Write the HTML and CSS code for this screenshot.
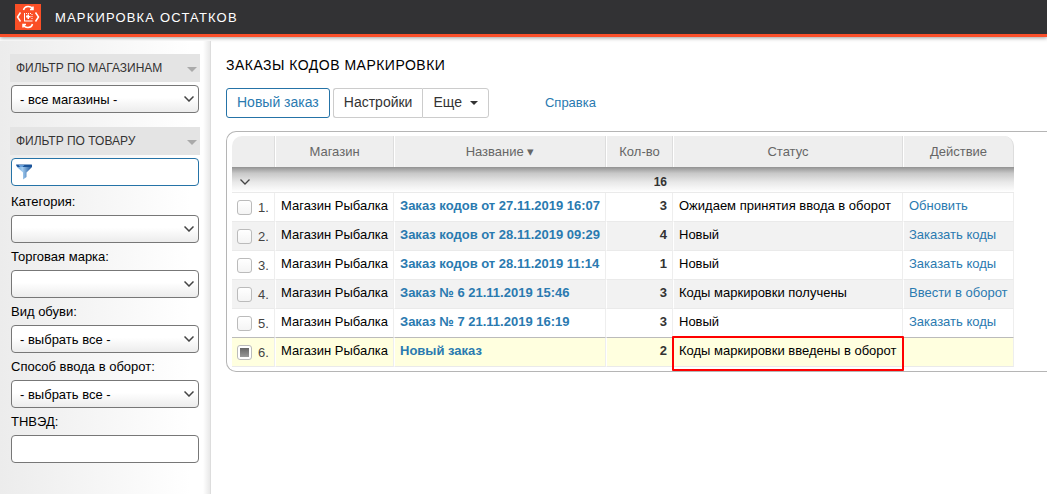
FILE: index.html
```html
<!DOCTYPE html>
<html lang="ru">
<head>
<meta charset="utf-8">
<meta name="viewport" content="width=device-width, initial-scale=1">
<title>Маркировка остатков</title>
<link rel="stylesheet" href="styles.css">
</head>
<body>
<header class="topbar">
  <svg class="logo" viewBox="0 0 26 26" aria-hidden="true">
    <rect width="26" height="26" fill="#fa4f26"/>
    <g fill="none" stroke="#fff" stroke-width="1.500">
      <path d="M8.500 6C9.500 1.500 16 1.500 17.500 5M18 2.500v3h-3"/>
      <path d="M17.500 20C16.500 24.500 10 24.500 8.500 21M8 23.500v-3h3"/>
      <path d="M5.500 8.500L2.500 13l3 4.500M20.500 8.500l3 4.500-3 4.500"/>
    </g>
    <path fill="#fff" d="M9 9h1v7.500h7.500v1H9zM11 9h1v1h-1zM13 9h1v1h-1zM15 9h1v1h-1zM16.500 10h1v1h-1zM16.500 12h1v1h-1zM16.500 14h1v1h-1zM11 11.500h1.500v-1H14v1.500h1.500v1.500H14V15h-1.500v-1.500H11z"/>
  </svg>
  <span class="brand">МАРКИРОВКА ОСТАТКОВ</span>
</header>
<div class="layout">
  <aside class="sidebar">
    <section class="filter">
      <h2 class="filter-title">ФИЛЬТР ПО МАГАЗИНАМ</h2>
      <select class="field" aria-label="Магазин"><option>- все магазины -</option></select>
    </section>
    <section class="filter">
      <h2 class="filter-title">ФИЛЬТР ПО ТОВАРУ</h2>
      <div class="search">
        <svg class="funnel" viewBox="0 0 16 16" aria-hidden="true">
          <defs><linearGradient id="fg"><stop offset="0" stop-color="#5d9ad6"/><stop offset=".4" stop-color="#a4cdf0"/><stop offset="1" stop-color="#144f97"/></linearGradient></defs>
          <path d="M0 1h16v2l-5.500 5.500V13L7 15.500v-7L1 3z" fill="url(#fg)"/>
          <path d="M0 .5h16L14.500 3h-13z" fill="#1b5499"/>
          <path d="M2.500 1h6L6.500 3H4z" fill="#659fdb"/>
        </svg>
        <input class="field search-input" type="text" aria-label="Поиск товара">
      </div>
      <label class="label" for="category">Категория:</label>
      <select class="field" id="category"><option></option></select>
      <label class="label" for="brand">Торговая марка:</label>
      <select class="field" id="brand"><option></option></select>
      <label class="label" for="kind">Вид обуви:</label>
      <select class="field" id="kind"><option>- выбрать все -</option></select>
      <label class="label" for="method">Способ ввода в оборот:</label>
      <select class="field" id="method"><option>- выбрать все -</option></select>
      <label class="label" for="code">ТНВЭД:</label>
      <input class="field" id="code" type="text">
    </section>
  </aside>
  <main class="content">
    <h1 class="title">ЗАКАЗЫ КОДОВ МАРКИРОВКИ</h1>
    <div class="toolbar">
      <button class="btn btn-primary" type="button">Новый заказ</button>
      <div class="group">
        <button class="btn" type="button">Настройки</button>
        <button class="btn more" type="button">Еще</button>
      </div>
      <a class="link help" href="#">Справка</a>
    </div>
    <div class="panel">
      <table class="orders">
        <colgroup><col class="c-num"><col class="c-shop"><col class="c-name"><col class="c-qty"><col class="c-status"><col class="c-action"></colgroup>
        <thead>
          <tr><th></th><th>Магазин</th><th>Название ▾</th><th>Кол-во</th><th>Статус</th><th>Действие</th></tr>
        </thead>
        <tbody>
          <tr class="summary"><td><svg class="chevron" viewBox="0 0 10 6" aria-hidden="true"><path d="M.5.5L5 5 9.500.5" fill="none" stroke="#444" stroke-width="1.300"/></svg></td><td></td><td></td><td class="qty">16</td><td></td><td></td></tr>
          <tr><td><label class="pick"><input class="check" type="checkbox">1.</label></td><td>Магазин Рыбалка</td><td><a class="link name" href="#">Заказ кодов от 27.11.2019 16:07</a></td><td class="qty">3</td><td>Ожидаем принятия ввода в оборот</td><td><a class="link" href="#">Обновить</a></td></tr>
          <tr><td><label class="pick"><input class="check" type="checkbox">2.</label></td><td>Магазин Рыбалка</td><td><a class="link name" href="#">Заказ кодов от 28.11.2019 09:29</a></td><td class="qty">4</td><td>Новый</td><td><a class="link" href="#">Заказать коды</a></td></tr>
          <tr><td><label class="pick"><input class="check" type="checkbox">3.</label></td><td>Магазин Рыбалка</td><td><a class="link name" href="#">Заказ кодов от 28.11.2019 11:14</a></td><td class="qty">1</td><td>Новый</td><td><a class="link" href="#">Заказать коды</a></td></tr>
          <tr><td><label class="pick"><input class="check" type="checkbox">4.</label></td><td>Магазин Рыбалка</td><td><a class="link name" href="#">Заказ № 6 21.11.2019 15:46</a></td><td class="qty">3</td><td>Коды маркировки получены</td><td><a class="link" href="#">Ввести в оборот</a></td></tr>
          <tr><td><label class="pick"><input class="check" type="checkbox">5.</label></td><td>Магазин Рыбалка</td><td><a class="link name" href="#">Заказ № 7 21.11.2019 16:19</a></td><td class="qty">3</td><td>Новый</td><td><a class="link" href="#">Заказать коды</a></td></tr>
          <tr class="selected"><td><label class="pick"><input class="check" type="checkbox" checked>6.</label></td><td>Магазин Рыбалка</td><td><a class="link name" href="#">Новый заказ</a></td><td class="qty">2</td><td class="marked">Коды маркировки введены в оборот</td><td></td></tr>
        </tbody>
      </table>
    </div>
  </main>
</div>
</body>
</html>
```
FILE: styles.css
```css
* { box-sizing: border-box; }
body {
  margin: 0;
  min-height: 100vh;
  display: flex;
  flex-direction: column;
  background: #fff;
  color: #000;
  font: 13px/16px "Liberation Sans", Arial, sans-serif;
}
.topbar {
  display: flex;
  align-items: center;
  gap: 14px;
  height: 37px;
  padding: 0 15px;
  background: #323234;
  border-bottom: 3px solid #fa4f2a;
  box-shadow: 0 1px 4px rgba(0, 0, 0, .4);
}
.logo { width: 26px; height: 26px; }
.brand { color: #fff; letter-spacing: .09em; padding-top: 1px; }
.layout { display: flex; flex: 1; padding-top: 4px; }
.sidebar {
  flex: none;
  width: 211px;
  padding: 13px 10px 14px;
  background: linear-gradient(to right, rgba(0, 0, 0, 0) 203px, rgba(0, 0, 0, .09)), linear-gradient(to right, #ececec, #fff 190px);
  border-right: 1px solid #ddd;
}
.filter { padding: 0 0 14px; }
.filter-title {
  display: flex;
  align-items: center;
  justify-content: space-between;
  height: 28px;
  margin: 0 0 3px;
  padding: 0 3px 0 6px;
  background: #e4e4e4;
  color: #333;
  font-size: 12px;
  font-weight: 400;
}
.filter-title::after {
  content: "";
  margin-top: 3px;
  border: 5px solid transparent;
  border-top-color: #aaa;
  border-bottom: 0;
}
.field {
  display: block;
  width: calc(100% - 2px);
  height: 28px;
  margin: 0 1px;
  padding: 0 8px;
  border: 1px solid #777;
  border-radius: 4px;
  background: #fff;
  color: #000;
  font: inherit;
}
.sidebar { padding-right: 10px; width: 211px; }
select.field {
  appearance: none;
  padding-top: 2px;
  background:
    url("data:image/svg+xml,%3Csvg xmlns='http://www.w3.org/2000/svg' width='10' height='6'%3E%3Cpath d='M.5.5L5 5 9.5.5' fill='none' stroke='%23444' stroke-width='1.5'/%3E%3C/svg%3E") no-repeat right 4px top 10px,
    linear-gradient(#fff 45%, #ececec);
}
.label { display: block; margin: 0 1px; padding: 7px 0 6px; line-height: 14px; }
.search { position: relative; margin-bottom: 2px; }
.search-input { border-color: #2573a7; padding-left: 26px; }
.funnel { position: absolute; left: 6px; top: 6px; width: 16px; height: 16px; }
.content { flex: 1; min-width: 0; padding: 16px 0 0 15px; }
.title { margin: 0; font-size: 14px; font-weight: 400; letter-spacing: .035em; }
.toolbar { display: flex; align-items: center; margin: 15px 0 13px; }
.btn {
  height: 30px;
  padding: 0 10px 2px;
  border: 1px solid #ccc;
  border-radius: 3px;
  background: #fff;
  color: #333;
  font: 14px/20px "Liberation Sans", Arial, sans-serif;
}
.btn-primary { border-color: #2573a7; color: #2a7ab0; }
.group { display: flex; margin-left: 3px; }
.group .btn:first-child { border-radius: 3px 0 0 3px; border-right: 0; }
.group .btn:last-child { border-radius: 0 3px 3px 0; }
.more { display: flex; align-items: center; gap: 8px; }
.more::after {
  content: "";
  margin-top: 2px;
  border: 4px solid transparent;
  border-top-color: #333;
  border-bottom: 0;
}
.link { color: #2a7ab0; text-decoration: none; }
.help { margin-left: 56px; }
.panel {
  padding: 4px 5px;
  border: 1px solid #b5b5b5;
  border-right: 0;
  border-radius: 10px 0 0 10px;
}
.orders { border-collapse: separate; border-spacing: 0; table-layout: fixed; width: 782px; }
.c-num { width: 43px; }
.c-shop { width: 119px; }
.c-name { width: 212px; }
.c-qty { width: 67px; }
.c-status { width: 230px; }
.c-action { width: 111px; }
.orders th {
  height: 31px;
  padding: 0;
  background: #eee;
  color: #666;
  font-weight: 400;
  border-right: 1px solid #ddd;
  border-left: 1px solid #fff;
}
.orders th:first-child { border-top-left-radius: 10px; border-left: 0; }
.orders th:last-child { border-top-right-radius: 10px; }
.orders td {
  height: 29px;
  padding: 0 5px 2px;
  white-space: nowrap;
  border-left: 1px solid #fff;
  border-right: 1px solid #eee;
  border-bottom: 1px solid #eaeaea;
}
.orders td:first-child { border-left: 0; }
.orders tr:nth-child(odd) td { background: #f2f2f2; }
.orders tr.summary td {
  height: 26px;
  padding-bottom: 0;
  border-left: 0;
  border-right: 0;
  background: linear-gradient(#929292, #c8c8c8 25%, #e8e8e8 60%, #fff);
}
.orders .qty { padding-right: 5px; text-align: right; font-weight: 700; color: #333; }
.orders .summary .qty { padding-top: 4px; padding-right: 6px; font-size: 12px; }
.chevron { display: block; width: 10px; height: 6px; margin: 4px 0 0 3px; }
.name { font-weight: 700; }
.pick { display: flex; align-items: center; gap: 6px; color: #444; padding-top: 3px; }
.check {
  appearance: none;
  flex: none;
  width: 15px;
  height: 15px;
  margin: 0;
  border: 1px solid #bbb;
  border-radius: 3px;
  background: linear-gradient(#fff, #f4f4f4);
}
.check:checked { background: linear-gradient(#666, #999) center / 9px 9px no-repeat, #fff; }
.orders tr.selected td { background: #ffffdf; }
.orders tr:has(+ .selected) td { border-bottom-color: #bbb; }
.marked { position: relative; }
.marked::after {
  content: "";
  position: absolute;
  inset: -2px -2px -5px;
  border: 2px solid #f00;
  border-radius: 1px;
}
```
